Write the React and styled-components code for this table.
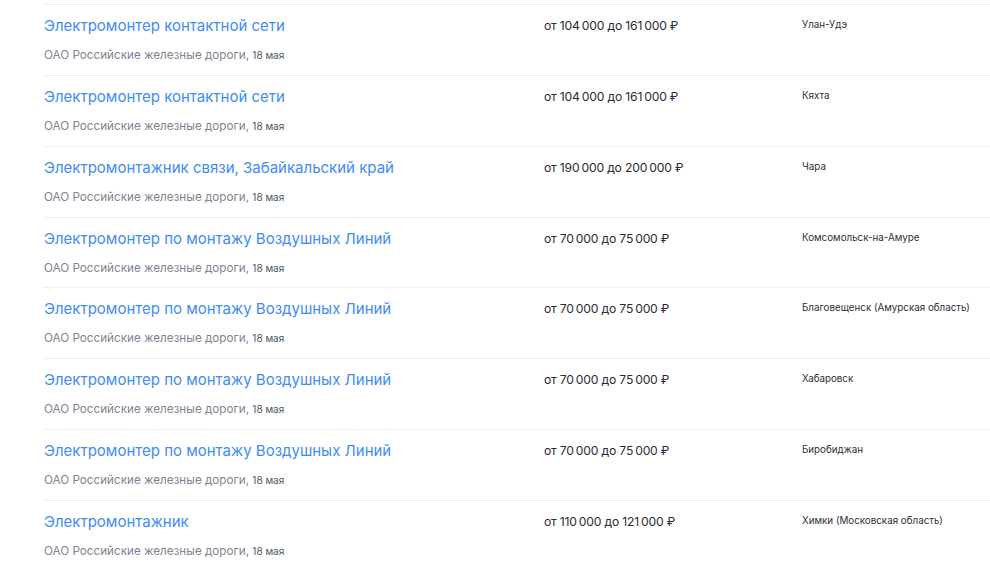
import React from "react";
import styled, { createGlobalStyle } from "styled-components";

const GlobalStyle = createGlobalStyle`
  body {
    margin: 0;
    background: #fff;
    font-family: Inter, "Noto Sans", sans-serif;
  }
`;

const nb = "\u2009";

const vacancies = [
  { title: "Электромонтер контактной сети", from: "104 000", to: "161 000", city: "Улан-Удэ" },
  { title: "Электромонтер контактной сети", from: "104 000", to: "161 000", city: "Кяхта" },
  { title: "Электромонтажник связи, Забайкальский край", from: "190 000", to: "200 000", city: "Чара" },
  { title: "Электромонтер по монтажу Воздушных Линий", from: "70 000", to: "75 000", city: "Комсомольск-на-Амуре" },
  { title: "Электромонтер по монтажу Воздушных Линий", from: "70 000", to: "75 000", city: "Благовещенск (Амурская область)" },
  { title: "Электромонтер по монтажу Воздушных Линий", from: "70 000", to: "75 000", city: "Хабаровск" },
  { title: "Электромонтер по монтажу Воздушных Линий", from: "70 000", to: "75 000", city: "Биробиджан" },
  { title: "Электромонтажник", from: "110 000", to: "121 000", city: "Химки (Московская область)" },
];

const money = (s) => s.replace(" ", nb);

const List = styled.ul`
  list-style: none;
  margin: 0;
  padding: 4px 0 0 44px;
`;

const Row = styled.li`
  display: grid;
  grid-template-columns: 500px 258px 1fr;
  height: 70.86px;
  box-sizing: border-box;
  border-top: 1px solid #eceef3;
  padding-top: 11px;
`;

const Main = styled.div`
  display: flex;
  flex-direction: column;
  gap: 10px;
`;

const Title = styled.a`
  font-size: 15px;
  line-height: 20px;
  color: #3f8cf3;
  text-decoration: none;
  cursor: pointer;
`;

const Meta = styled.div`
  font-size: 11.7px;
  line-height: 18px;
  color: #7d8592;
`;

const Date = styled.span`
  font-size: 10px;
  color: #4f5560;
`;

const Salary = styled.div`
  font-size: 12.2px;
  line-height: 20px;
  letter-spacing: -0.2px;
  color: #2a2d33;
`;

const City = styled.div`
  font-size: 9.8px;
  line-height: 18px;
  color: #2d3036;
`;

export default function App() {
  return (
    <>
      <GlobalStyle />
      <List>
        {vacancies.map((v, i) => (
          <Row key={i}>
            <Main>
              <Title>{v.title}</Title>
              <Meta>
                ОАО Российские железные дороги, <Date>18 мая</Date>
              </Meta>
            </Main>
            <Salary>
              от {money(v.from)} до {money(v.to)} ₽
            </Salary>
            <City>{v.city}</City>
          </Row>
        ))}
      </List>
    </>
  );
}
